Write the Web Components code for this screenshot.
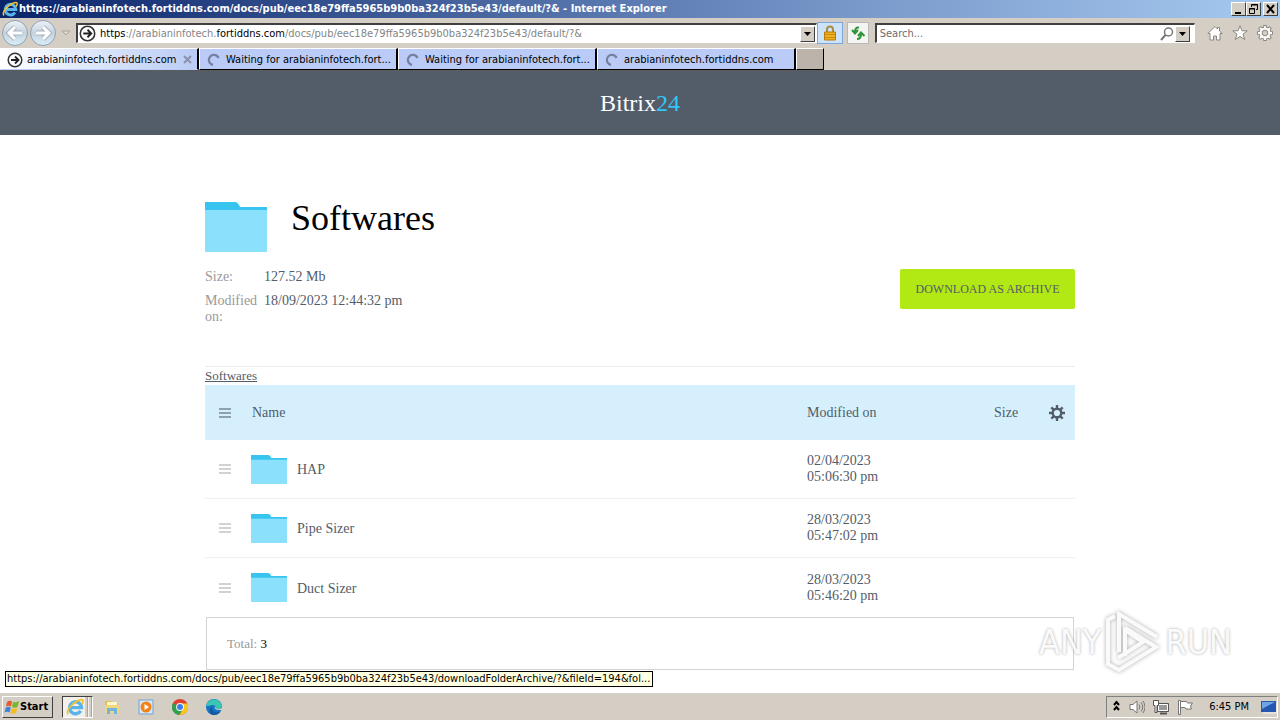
<!DOCTYPE html>
<html lang="en-us">
<head>
<meta charset="utf-8">
<title>Softwares</title>
<style>
    html, body { height: 100%; }
    body {
        margin: 0;
        display: flex;
        flex-direction: column;
        overflow: hidden;
        background: #fff;
        --face: #d5cec5;
        --ui: 11px/14px "DejaVu Sans Condensed", "Liberation Sans", sans-serif;
        --serif: "Liberation Serif", serif;
    }
</style>
</head>
<body>

<!-- window caption -->
<template id="titleBarTemplate">
    <style>
        :host {
            display: flex;
            align-items: center;
            height: 18px;
            padding: 0 2px;
            gap: 1px;
            background: linear-gradient(90deg, #0a246a, #7696c8 65%, #a6caf0);
            color: #fff;
            font: var(--ui);
            font-weight: bold;
        }
        .title { flex: 1; min-width: 0; white-space: nowrap; overflow: hidden; }
        .buttons { display: flex; }
        button {
            width: 15px;
            height: 14px;
            padding: 0;
            border: 1px solid;
            border-color: #fff #404040 #404040 #fff;
            background: var(--face);
        }
        button:last-child { margin-left: 2px; }
        svg { display: block; }
    </style>
    <ui-icon name="ie" size="16"></ui-icon>
    <div class="title"><slot></slot></div>
    <div class="buttons">
        <button aria-label="Minimize"><svg width="13" height="12"><path d="M3 9h6v2H3z"/></svg></button>
        <button aria-label="Restore"><svg width="13" height="12" fill="none" stroke="#000"><path d="M4.500 4V1.500h6v5H9M4 2h7M2.500 5.500h5v5h-5zM2 6h6"/></svg></button>
        <button aria-label="Close"><svg width="13" height="12"><path d="M3 2l7 8M10 2l-7 8" stroke="#000" stroke-width="2"/></svg></button>
    </div>
</template>

<!-- back / forward, address, search -->
<template id="navBarTemplate">
    <style>
        :host {
            display: flex;
            align-items: center;
            height: 30px;
            padding: 0 7px 0 2px;
            background: var(--face);
            font: var(--ui);
        }
        button { padding: 0; border: 0; background: none; display: block; flex: none; }
        .round {
            width: 26px;
            height: 26px;
            margin-right: 2px;
            border: 1px solid #8fa3b5;
            border-radius: 50%;
            background: linear-gradient(#eef2f6, #c5d2de 50%, #d9eef8);
        }
        .history { width: 16px; margin-right: 2px; }
        .box {
            display: flex;
            align-items: center;
            height: 20px;
            box-sizing: border-box;
            border: 1px solid;
            border-color: #404040 #fff #fff #404040;
            border-top-width: 2px;
            border-left-width: 2px;
            background: #fff;
        }
        .address { flex: 743; min-width: 0; padding-left: 1px; }
        .search { flex: 317; min-width: 0; padding-left: 3px; margin-right: 12px; }
        .url { flex: 1; min-width: 0; overflow: hidden; white-space: nowrap; color: #858585; margin-left: 4px; outline: 0; }
        .url b { font-weight: normal; color: #000; }
        input { flex: 1; min-width: 0; border: 0; padding: 0; font: inherit; outline: 0; background: none; }
        input::placeholder { color: #6d6d6d; opacity: 1; }
        .drop {
            width: 15px;
            height: 16px;
            margin-right: 1px;
            border: 1px solid;
            border-color: #fff #404040 #404040 #fff;
            background: var(--face);
        }
        .search .drop { margin-right: 4px; }
        .lock { width: 26px; height: 22px; border: 1px solid #7da7dc; background: #cde2fb; padding-left: 4px; }
        .refresh { width: 22px; height: 22px; margin: 0 6px 0 4px; border: 1px solid #b9b9b9; background: #f4f4f2; padding-left: 2px; }
        .tools { display: flex; gap: 9px; }
    </style>
    <button class="round" aria-label="Back"><svg width="24" height="24"><path d="M19 12H8M12 6l-6 6 6 6" fill="none" stroke="#a3b3c2" stroke-width="5"/><path d="M19 12H8M12 6l-6 6 6 6" fill="none" stroke="#fff" stroke-width="3"/></svg></button>
    <button class="round" aria-label="Forward"><svg width="24" height="24"><path d="M5 12h11M12 6l6 6-6 6" fill="none" stroke="#a3b3c2" stroke-width="5"/><path d="M5 12h11M12 6l6 6-6 6" fill="none" stroke="#fff" stroke-width="3"/></svg></button>
    <button class="history" aria-label="Recent pages"><svg width="14" height="10"><path d="M3 3h8L7 7z" fill="#ddd8d0" stroke="#aaa49b"/></svg></button>
    <div class="box address">
        <ui-icon name="go" size="17"></ui-icon>
        <div class="url" role="textbox" aria-label="Address" contenteditable="true" spellcheck="false"><slot></slot></div>
        <button class="drop" aria-label="Show addresses"><svg width="13" height="14"><path d="M3 5h7L6.500 9z"/></svg></button>
    </div>
    <button class="lock" aria-label="Security report"><ui-icon name="lock" size="16"></ui-icon></button>
    <button class="refresh" aria-label="Refresh"><ui-icon name="refresh" size="16"></ui-icon></button>
    <div class="box search">
        <input type="text" aria-label="Search" placeholder="Search...">
        <ui-icon name="find" size="16"></ui-icon>
        <button class="drop" aria-label="Search options"><svg width="13" height="14"><path d="M3 5h7L6.500 9z"/></svg></button>
    </div>
    <div class="tools">
        <button aria-label="Home"><ui-icon name="home" size="16"></ui-icon></button>
        <button aria-label="Favorites"><ui-icon name="star" size="16"></ui-icon></button>
        <button aria-label="Tools"><ui-icon name="cog" size="16"></ui-icon></button>
    </div>
</template>

<template id="tabStripTemplate">
    <style>
        :host {
            display: flex;
            height: 22px;
            background: var(--face);
            border-bottom: 1px solid #5c5c5c;
        }
        .new {
            width: 28px;
            padding: 0;
            border: 1px solid;
            border-color: #fff #000 #000 #fff;
            background: #bcb4aa;
        }
    </style>
    <slot></slot>
    <button class="new" aria-label="New tab"></button>
</template>

<template id="browserTabTemplate">
    <style>
        :host {
            display: flex;
            flex: 0 1 199px;
            min-width: 0;
            box-sizing: border-box;
            align-items: center;
            gap: 4px;
            padding: 2px 4px 0 6px;
            border: 1px solid;
            border-color: #fff #000 #000 #fff;
            border-right-width: 2px;
            background: #b9cbf6;
            font: var(--ui);
            color: #000;
        }
        :host([active]) {
            background: linear-gradient(90deg, #fff, #e8effd 30%, #b9cbf6);
            border-bottom-color: #b9cbf6;
        }
        .label { flex: 1; min-width: 0; white-space: nowrap; overflow: hidden; }
        button { padding: 0; border: 0; background: none; display: none; }
        :host([active]) button { display: block; }
    </style>
    <ui-icon size="16"></ui-icon>
    <div class="label"><slot></slot></div>
    <button aria-label="Close tab"><svg width="10" height="10"><path d="M1 1l7 7M8 1L1 8" stroke="#8a93a8" stroke-width="2"/></svg></button>
</template>

<template id="siteHeaderTemplate">
    <style>
        :host {
            display: block;
            flex: none;
            background: #535c69;
            text-align: center;
            font: 24px/64px var(--serif);
        }
        a { color: #fff; text-decoration: none; }
        span { color: #2fc7f7; }
    </style>
    <a href="#">Bitrix<span>24</span></a>
</template>

<!-- folder title, details and the download button -->
<template id="folderSummaryTemplate">
    <style>
        :host { display: block; font: 14px/16px var(--serif); color: #535c69; }
        .head { display: flex; gap: 24px; }
        .head folder-icon { margin-top: 4px; }
        h1 { margin: 0; font: 36px/40px var(--serif); color: #000; }
        .info { display: flex; justify-content: space-between; align-items: flex-start; padding-top: 13px; }
        table { border-collapse: collapse; }
        th, td { padding: 4px 0; text-align: left; vertical-align: top; font-weight: normal; }
        th { width: 59px; color: #999; }
        button {
            min-width: 175px;
            height: 40px;
            margin-top: 4px;
            padding: 0 14px;
            border: 0;
            border-radius: 2px;
            background: #b2e813;
            color: #535c69;
            font: 12px/40px var(--serif);
            text-transform: uppercase;
        }
    </style>
    <div class="head">
        <folder-icon width="62" height="50"></folder-icon>
        <h1><slot></slot></h1>
    </div>
    <div class="info">
        <table>
            <tr><th scope="row">Size:</th><td id="size"></td></tr>
            <tr><th scope="row">Modified on:</th><td id="modified"></td></tr>
        </table>
        <button>Download as archive</button>
    </div>
</template>

<template id="fileListTemplate">
    <style>
        :host { display: block; font: 14px/16px var(--serif); color: #535c69; }
        table { width: 100%; table-layout: fixed; border-collapse: separate; border-spacing: 0; }
        th, td { padding: 0; text-align: left; font-weight: normal; }
        th { height: 55px; background: #d5f0fc; }
        td { height: 58px; border-bottom: 1px solid #eef0f2; }
        tr:last-child td { height: 59px; border-bottom: 0; }
        .grip { width: 46px; }
        .grip svg { display: block; margin-left: 14px; }
        th.grip { color: #8fa0ae; }
        td.grip { color: #d0d3d6; }
        th.title { padding-left: 1px; }
        .date { width: 187px; }
        .size { width: 55px; }
        .gear { width: 26px; }
        .name { display: flex; align-items: center; gap: 10px; }
        .name a { padding-top: 2px; }
        a { color: inherit; text-decoration: none; }
        button { display: block; padding: 0; border: 0; background: none; }
        .total {
            margin: 0 1px;
            padding: 18px 20px 17px;
            border: 1px solid #d3d3d3;
            font-size: 13px;
            color: #999;
        }
        .total b { font-weight: normal; color: #000; }
    </style>
    <table>
        <thead>
            <tr>
                <th class="grip"><svg width="12" height="10" stroke="currentColor" stroke-width="2"><path d="M0 1h12M0 5h12M0 9h12"/></svg></th>
                <th class="title">Name</th>
                <th class="date">Modified on</th>
                <th class="size">Size</th>
                <th class="gear"><button aria-label="Columns"><ui-icon name="gear" size="16"></ui-icon></button></th>
            </tr>
        </thead>
        <tbody></tbody>
    </table>
    <div class="total">Total: <b></b></div>
</template>

<template id="anyRunMarkTemplate">
    <style>
        :host {
            position: absolute;
            right: 48px;
            bottom: 18px;
            display: flex;
            align-items: center;
            gap: 4px;
            font: 34px/64px "DejaVu Sans Condensed", "Liberation Sans", sans-serif;
            color: #fafafa;
            text-shadow: 0 0 3px #aaa;
            pointer-events: none;
        }
        svg { display: block; filter: drop-shadow(0 0 2px #aaa); }
    </style>
    <span>ANY</span>
    <svg width="56" height="64" viewBox="0 0 56 64" fill="none" stroke="#fafafa" stroke-width="4">
        <path d="M14 42V4L52 27M20 18l31 19L14 60 3 54V10l7-4M20 46V20l18 12-25 16"/>
    </svg>
    <span>RUN</span>
</template>

<template id="statusTipTemplate">
    <style>
        :host {
            position: absolute;
            left: 5px;
            bottom: 5px;
            padding: 0 2px 0 1px;
            border: 1px solid #000;
            background: #ffffe1;
            font: var(--ui);
            color: #000;
            white-space: nowrap;
        }
    </style>
    <slot></slot>
</template>

<template id="taskBarTemplate">
    <style>
        :host {
            display: flex;
            align-items: center;
            height: 24px;
            padding: 2px 2px 1px;
            border-top: 1px solid #fff;
            box-shadow: 0 -1px #d5cec5;
            background: var(--face);
            font: var(--ui);
            color: #000;
        }
        button { padding: 0; border: 0; background: none; display: block; }
        .start {
            display: flex;
            align-items: center;
            height: 22px;
            padding: 0 4px 0 1px;
            border: 1px solid;
            border-color: #fff #404040 #404040 #fff;
            font: inherit;
            font-weight: bold;
        }
        .running {
            display: flex;
            height: 22px;
            margin: 0 11px 0 9px;
            border: 1px solid;
            border-color: #404040 #fff #fff #404040;
            background: #f3f0ec;
            align-items: center;
            padding: 0 0 0 3px;
        }
        .running i { align-self: stretch; width: 2px; margin-left: 1px; border-right: 1px solid #aaa49b; background: var(--face); }
        .pinned { display: flex; gap: 18px; flex: 1; }
        .tray {
            display: flex;
            align-items: center;
            height: 20px;
            padding-left: 5px;
            gap: 8px;
            border: 1px solid;
            border-color: #808080 #fff #fff #808080;
        }
        .clock { padding: 0 4px 0 8px; }
    </style>
    <button class="start"><ui-icon name="flag" size="16"></ui-icon>Start</button>
    <button class="running" aria-label="Internet Explorer"><ui-icon name="ie" size="18"></ui-icon><i></i><i></i></button>
    <div class="pinned">
        <button aria-label="Explorer"><ui-icon name="explorer" size="16"></ui-icon></button>
        <button aria-label="Media Player"><ui-icon name="media" size="16"></ui-icon></button>
        <button aria-label="Chrome"><ui-icon name="chrome" size="16"></ui-icon></button>
        <button aria-label="Edge"><ui-icon name="edge" size="16"></ui-icon></button>
    </div>
    <div class="tray">
        <button aria-label="Show hidden icons"><svg width="9" height="14" fill="none" stroke="#000" stroke-width="2"><path d="M2 6l2.500-3L7 6M2 11l2.500-3L7 11"/></svg></button>
        <ui-icon name="sound" size="16"></ui-icon>
        <ui-icon name="network" size="16"></ui-icon>
        <ui-icon name="action" size="16"></ui-icon>
        <span class="clock">6:45 PM</span>
        <ui-icon name="desktop" size="16"></ui-icon>
    </div>
</template>

<title-bar>https://arabianinfotech.fortiddns.com/docs/pub/eec18e79ffa5965b9b0ba324f23b5e43/default/?&amp; - Internet Explorer</title-bar>
<nav-bar></nav-bar>
<tab-strip>
    <browser-tab active icon="go">arabianinfotech.fortiddns.com</browser-tab>
    <browser-tab icon="spin">Waiting for arabianinfotech.fort...</browser-tab>
    <browser-tab icon="spin">Waiting for arabianinfotech.fort...</browser-tab>
    <browser-tab icon="spin">arabianinfotech.fortiddns.com</browser-tab>
</tab-strip>
<page-view></page-view>
<task-bar></task-bar>

<template id="pageViewTemplate">
    <style>
        :host {
            position: relative;
            display: flex;
            flex-direction: column;
            flex: 1;
            min-height: 0;
            overflow: hidden;
            background: #fff;
        }
        main { width: 100%; max-width: 870px; margin: 0 auto; padding-top: 63px; }
        nav {
            margin-top: 37px;
            border-top: 1px solid #eaecee;
            font: 13px/18px var(--serif);
        }
        nav a { color: #535c69; }
    </style>
    <site-header></site-header>
    <main>
        <folder-summary size="127.52 Mb" modified="18/09/2023 12:44:32 pm">Softwares</folder-summary>
        <nav><a href="#">Softwares</a></nav>
        <file-list></file-list>
    </main>
    <any-run-mark></any-run-mark>
    <status-tip>https://arabianinfotech.fortiddns.com/docs/pub/eec18e79ffa5965b9b0ba324f23b5e43/downloadFolderArchive/?&amp;fileId=194&amp;fol...</status-tip>
</template>

<script>
    // all on a 16 x 16 grid
    const ICONS = {
        ie: '<g fill="none"><path d="M13 11.500a5.300 5.300 0 1 1 .8-3H4" stroke="#5ab4ea" stroke-width="3"/><path d="M2 14.500C-1 11 8 2 14 1.500c2 0 1 3 0 4" stroke="#f2c230" stroke-width="1.500"/></g>',
        go: '<circle cx="8" cy="8" r="6.800" fill="#fff" stroke="#333" stroke-width="1.500"/><path d="M4 8h7M8 4.500L11.500 8 8 11.500" fill="none" stroke="#222" stroke-width="1.800"/>',
        spin: '<path d="M7 12.800A5 5 0 1 1 12.500 6" fill="none" stroke="#75809f" stroke-width="2.200"/>',
        lock: '<path d="M5 7V4.500a3 3 0 0 1 6 0V7" fill="none" stroke="#a98e3f" stroke-width="2"/><path d="M2.500 7h11v8h-11z" fill="#eeb01e" stroke="#b97b0c"/><path d="M3 9.500h10M3 12.500h10" stroke="#c98b12"/>',
        refresh: '<path d="M9 2.500Q5 2 5 7M2 5l3 3.500L8 5M7 14q4 0 4-5M8 11l3-3.500 3.500 3.500" fill="none" stroke="#2f9438" stroke-width="2"/>',
        find: '<circle cx="9.500" cy="6" r="4" fill="none" stroke="#777" stroke-width="1.500"/><path d="M6.500 9L2 14" stroke="#777" stroke-width="2"/>',
        home: '<path d="M8 1.500L.8 8.500h2.200V15h3.500v-4h3v4H13V8.500h2.200L12.500 6V2.500h-2V4z" fill="#fff" stroke="#8c8780"/>',
        star: '<path d="M8 .8l2 5h5.200l-4.200 3.400 1.700 5.300L8 11.500l-4.700 3L5 9.200.8 5.800H6z" fill="#fff" stroke="#8c8780"/>',
        cog: '<g fill="none"><path d="M8 0v16M0 8h16M2.300 2.300l11.400 11.400M13.700 2.300L2.300 13.700" stroke="#8c8780" stroke-width="3.500"/><circle cx="8" cy="8" r="4.500" stroke="#8c8780" stroke-width="4"/><path d="M8 1v14M1 8h14M3 3l10 10M13 3L3 13" stroke="#fff" stroke-width="1.800"/><circle cx="8" cy="8" r="4.500" stroke="#fff" stroke-width="2"/></g><circle cx="8" cy="8" r="2.800" fill="#d5cec5" stroke="#8c8780"/>',
        gear: '<g fill="none" stroke="#535c69"><circle cx="8" cy="8" r="4.300" stroke-width="2.400"/><path d="M8 0v3M8 13v3M0 8h3M13 8h3M2.300 2.300l2.200 2.200M11.500 11.500l2.200 2.200M13.700 2.300l-2.200 2.200M4.500 11.500l-2.200 2.200" stroke-width="2.400"/></g>',
        flag: '<path d="M3 3q2.500-2 5-.5L7 7.500q-2.500-1.500-5 0z" fill="#e8592b"/><path d="M9 3q2.500 1 6-1l-1.500 6q-3 1.500-5.500 0z" fill="#76b82a"/><path d="M1.800 8.500q2.500-1.500 5 0L5.500 13.500q-2-1.500-5 0z" fill="#3d83d6"/><path d="M7.800 9q2.500 1.500 5.500 0L12 14q-3 1.500-5.500 0z" fill="#f5bd1c"/>',
        explorer: '<path d="M1 2h6l1 2h6v10H1z" fill="#e3bd55"/><path d="M3 3h10v4H3z" fill="#fff6c9"/><path d="M1 6h14v8H1z" fill="#f0d67c"/><path d="M3 15V9h10v6h-3v-3H6v3z" fill="#6fb5de"/>',
        media: '<path d="M1 1h14v14H1z" fill="#d7e8f8" stroke="#6fa2d3"/><circle cx="8" cy="8" r="5.500" fill="#f38318"/><path d="M6.500 5v6L11 8z" fill="#fff"/>',
        chrome: '<circle cx="8" cy="8" r="8" fill="#e2402f"/><path d="M1 4a8 8 0 0 0 6.500 12L11 10 8 8z" fill="#2fa14f"/><path d="M15.300 4.500A8 8 0 0 1 7.500 16L11.500 9 9 4.500z" fill="#fbc71c"/><circle cx="8" cy="8" r="3.900" fill="#fff"/><circle cx="8" cy="8" r="3" fill="#3f7de8"/>',
        edge: '<circle cx="8" cy="8" r="8" fill="#1474c6"/><path d="M.5 7C1-1 14-2 15.800 6.500c.5 4-4 5-6 3.500 1-1 .5-4-3-4C3 6 1 8 .5 7z" fill="#3bc6b4"/><path d="M7 7c-3 4 2 8 7.500 5.500A8 8 0 0 1 8 16C3 16 2 9 7 7z" fill="#155a9f"/><path d="M9 7c-1 2 0 4 5.500 4H16V9c-3 2-6 1.500-7-2z" fill="#d5cec5"/>',
        sound: '<path d="M1 5.500h3L8 2v12l-4-3.500H1z" fill="#fff" stroke="#777"/><path d="M10 5.500q2 2.500 0 5M12 3.500q3.500 4.500 0 9M14 2q4 6 0 12" fill="none" stroke="#777"/>',
        network: '<path d="M4.500 4.500h11v8h-11z" fill="#999" stroke="#555"/><path d="M5.500 5.500h9v6h-9z" fill="none" stroke="#fff"/><path d="M7 14.500h7" stroke="#555" stroke-width="2"/><path d="M.5 1.500h5v5h-1.500v7h-2v-7H.5z" fill="#fff" stroke="#555"/>',
        action: '<path d="M1.500 1.500h2v14h-2z" fill="#fff" stroke="#777"/><path d="M3.500 2.500h6l1 1.500h5l-2 3 1 3H9L8 8.500H3.500z" fill="#fff" stroke="#777"/>',
        desktop: '<path d="M0 2h15v11H0z" fill="#2458b0"/><path d="M1 3h13L1 10z" fill="#6ea5e4"/><path d="M2 14h14V4" fill="none" stroke="#f4f4f4"/>'
    };

    const FILES = [
        { name: 'HAP', date: '02/04/2023', time: '05:06:30 pm' },
        { name: 'Pipe Sizer', date: '28/03/2023', time: '05:47:02 pm' },
        { name: 'Duct Sizer', date: '28/03/2023', time: '05:46:20 pm' }
    ];

    class TemplateElement extends HTMLElement {
        constructor(templateId) {
            super();
            const template = document.getElementById(templateId).content;
            this.attachShadow({ mode: 'open' }).appendChild(template.cloneNode(true));
        }
    }

    class UiIcon extends HTMLElement {
        static observedAttributes = ['name'];

        constructor() {
            super();
            this.attachShadow({ mode: 'open' });
        }

        connectedCallback() {
            this.render();
        }

        attributeChangedCallback() {
            this.render();
        }

        render() {
            const size = this.getAttribute('size') || 16;
            this.shadowRoot.innerHTML = `
                <style>:host { display: block; flex: none; } svg { display: block; }</style>
                <svg width="${size}" height="${size}" viewBox="0 0 16 16" aria-hidden="true">${ICONS[this.getAttribute('name')] || ''}</svg>`;
        }
    }

    class FolderIcon extends HTMLElement {
        constructor() {
            super();
            this.attachShadow({ mode: 'open' });
        }

        connectedCallback() {
            this.shadowRoot.innerHTML = `
                <style>:host { display: block; flex: none; } svg { display: block; }</style>
                <svg width="${this.getAttribute('width')}" height="${this.getAttribute('height')}" viewBox="0 0 62 50" preserveAspectRatio="none" aria-hidden="true">
                    <path d="M0 0h30q3 0 5 5h27v5H0z" fill="#37c4ef"/>
                    <path d="M0 8h62v41q0 1-1 1H1q-1 0-1-1z" fill="#8be0fb"/>
                </svg>`;
        }
    }

    class TitleBar extends TemplateElement {
        constructor() { super('titleBarTemplate'); }
    }

    class NavBar extends TemplateElement {
        constructor() {
            super('navBarTemplate');
            this.shadowRoot.querySelector('.url').innerHTML =
                '<b>https</b>://arabianinfotech.<b>fortiddns.com</b>/docs/pub/eec18e79ffa5965b9b0ba324f23b5e43/default/?&amp;';
        }
    }

    class TabStrip extends TemplateElement {
        constructor() { super('tabStripTemplate'); }
    }

    class BrowserTab extends TemplateElement {
        constructor() { super('browserTabTemplate'); }

        connectedCallback() {
            this.shadowRoot.querySelector('ui-icon').setAttribute('name', this.getAttribute('icon'));
        }
    }

    class SiteHeader extends TemplateElement {
        constructor() { super('siteHeaderTemplate'); }
    }

    class FolderSummary extends TemplateElement {
        constructor() { super('folderSummaryTemplate'); }

        connectedCallback() {
            this.shadowRoot.getElementById('size').textContent = this.getAttribute('size');
            this.shadowRoot.getElementById('modified').textContent = this.getAttribute('modified');
        }
    }

    class FileList extends TemplateElement {
        constructor() { super('fileListTemplate'); }

        connectedCallback() {
            this.shadowRoot.querySelector('tbody').innerHTML = FILES.map(file => `
                <tr>
                    <td class="grip"><svg width="12" height="10" stroke="currentColor" stroke-width="2"><path d="M0 1h12M0 5h12M0 9h12"/></svg></td>
                    <td><div class="name"><folder-icon width="36" height="29"></folder-icon><a href="#">${file.name}</a></div></td>
                    <td>${file.date}<br>${file.time}</td>
                    <td></td>
                    <td></td>
                </tr>`).join('');
            this.shadowRoot.querySelector('.total b').textContent = FILES.length;
        }
    }

    class AnyRunMark extends TemplateElement {
        constructor() { super('anyRunMarkTemplate'); }
    }

    class StatusTip extends TemplateElement {
        constructor() { super('statusTipTemplate'); }
    }

    class TaskBar extends TemplateElement {
        constructor() { super('taskBarTemplate'); }
    }

    class PageView extends TemplateElement {
        constructor() { super('pageViewTemplate'); }
    }

    customElements.define('ui-icon', UiIcon);
    customElements.define('folder-icon', FolderIcon);
    customElements.define('title-bar', TitleBar);
    customElements.define('nav-bar', NavBar);
    customElements.define('tab-strip', TabStrip);
    customElements.define('browser-tab', BrowserTab);
    customElements.define('site-header', SiteHeader);
    customElements.define('folder-summary', FolderSummary);
    customElements.define('file-list', FileList);
    customElements.define('any-run-mark', AnyRunMark);
    customElements.define('status-tip', StatusTip);
    customElements.define('task-bar', TaskBar);
    customElements.define('page-view', PageView);
</script>
</body>
</html>
